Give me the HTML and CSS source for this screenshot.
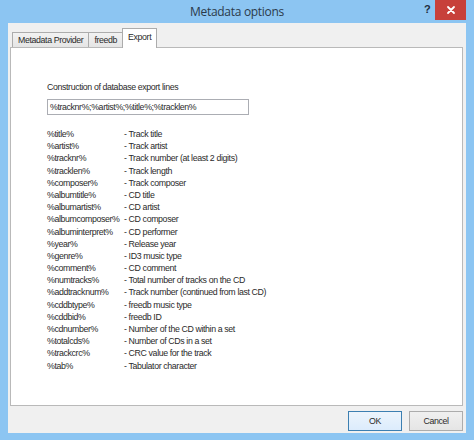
FILE: index.html
```html
<!DOCTYPE html>
<html>
<head>
<meta charset="utf-8">
<link rel="stylesheet" href="styles.css">
</head>
<body>
<div class="window">
  <div class="titlebar">
    <div class="title">Metadata options</div>
    <div class="help">?</div>
    <div class="close">
      <svg width="10" height="10" viewBox="0 0 10 10"><path d="M2 2 L8 8 M8 2 L2 8" stroke="#fff" stroke-width="1.8" stroke-linecap="round"/></svg>
    </div>
  </div>
  <div class="client">
    <div class="tabs">
      <div class="tab">Metadata Provider</div>
      <div class="tab">freedb</div>
      <div class="tab active">Export</div>
    </div>
    <div class="panel">
      <div class="label">Construction of database export lines</div>
      <div class="input">%tracknr%;%artist%;%title%;%tracklen%</div>
      <div class="vars">
        <div>%title%</div><div>- Track title</div>
        <div>%artist%</div><div>- Track artist</div>
        <div>%tracknr%</div><div>- Track number (at least 2 digits)</div>
        <div>%tracklen%</div><div>- Track length</div>
        <div>%composer%</div><div>- Track composer</div>
        <div>%albumtitle%</div><div>- CD title</div>
        <div>%albumartist%</div><div>- CD artist</div>
        <div>%albumcomposer%</div><div>- CD composer</div>
        <div>%albuminterpret%</div><div>- CD performer</div>
        <div>%year%</div><div>- Release year</div>
        <div>%genre%</div><div>- ID3 music type</div>
        <div>%comment%</div><div>- CD comment</div>
        <div>%numtracks%</div><div>- Total number of tracks on the CD</div>
        <div>%addtracknum%</div><div>- Track number (continued from last CD)</div>
        <div>%cddbtype%</div><div>- freedb music type</div>
        <div>%cddbid%</div><div>- freedb ID</div>
        <div>%cdnumber%</div><div>- Number of the CD within a set</div>
        <div>%totalcds%</div><div>- Number of CDs in a set</div>
        <div>%trackcrc%</div><div>- CRC value for the track</div>
        <div>%tab%</div><div>- Tabulator character</div>
      </div>
    </div>
    <div class="buttons">
      <div class="btn default">OK</div>
      <div class="btn">Cancel</div>
    </div>
  </div>
</div>
</body>
</html>
```

FILE: styles.css
```css
* { box-sizing: border-box; }
html, body { margin: 0; padding: 0; }
body {
  width: 474px;
  height: 440px;
  font-family: "Liberation Sans", Arial, sans-serif;
  font-size: 8.8px;
  letter-spacing: -0.38px;
  color: #2a2a2a;
}
.window {
  width: 474px;
  height: 440px;
  background: #8cc5f2;
  display: flex;
  flex-direction: column;
  padding: 0 8px 7px 8px;
}
.titlebar {
  height: 23px;
  position: relative;
  flex: none;
}
.title {
  text-align: center;
  font-family: "Open Sans", "Liberation Sans", sans-serif;
  font-size: 12px;
  letter-spacing: -0.3px;
  line-height: 23px;
  color: #2b3a4a;
}
.help {
  position: absolute;
  left: 416px;
  top: 3px;
  font-family: "Liberation Sans", sans-serif;
  font-weight: bold;
  font-size: 11px;
  letter-spacing: 0;
  color: #1f2d3d;
}
.close {
  position: absolute;
  left: 427px;
  top: 0;
  width: 31px;
  height: 20px;
  background: #c7403a;
  display: flex;
  align-items: center;
  justify-content: center;
}
.close svg { display: block; }
.client {
  flex: 1;
  background: #f0f0f0;
  display: flex;
  flex-direction: column;
  padding: 4px 3px 0 2px;
}
.tabs {
  display: flex;
  align-items: flex-end;
  height: 20px;
  padding-left: 2px;
  position: relative;
  z-index: 1;
}
.tab {
  height: 15px;
  padding: 0 5px;
  line-height: 14px;
  border: 1px solid #acacac;
  border-bottom: none;
  background: linear-gradient(#f2f2f2, #e5e5e5);
  margin-right: -1px;
  color: #2a2a2a;
}
.tab.active {
  height: 20px;
  background: #fff;
  line-height: 17px;
  padding: 0 5px;
  margin-bottom: -1px;
}
.panel {
  background: #fff;
  border: 1px solid #b9b9b9;
  height: 359px;
  padding: 33px 0 0 36px;
  flex: none;
}
.label {
  line-height: 12px;
  height: 12px;
}
.input {
  margin-top: 6px;
  width: 202px;
  height: 16px;
  border: 1px solid #abadb3;
  line-height: 14px;
  padding-left: 2px;
}
.vars {
  margin-top: 13px;
  display: grid;
  grid-template-columns: 77px auto;
  grid-auto-rows: 12.2px;
  line-height: 12.2px;
}
.buttons {
  display: flex;
  justify-content: flex-end;
  gap: 7px;
  margin-top: 5px;
}
.btn {
  width: 54px;
  height: 20px;
  border: 1px solid #acacac;
  background: linear-gradient(#f0f0f0, #e5e5e5);
  text-align: center;
  line-height: 18px;
}
.btn.default {
  border-color: #3c7fb1;
  background: linear-gradient(#ecf4fc, #dcecfc);
}
```
